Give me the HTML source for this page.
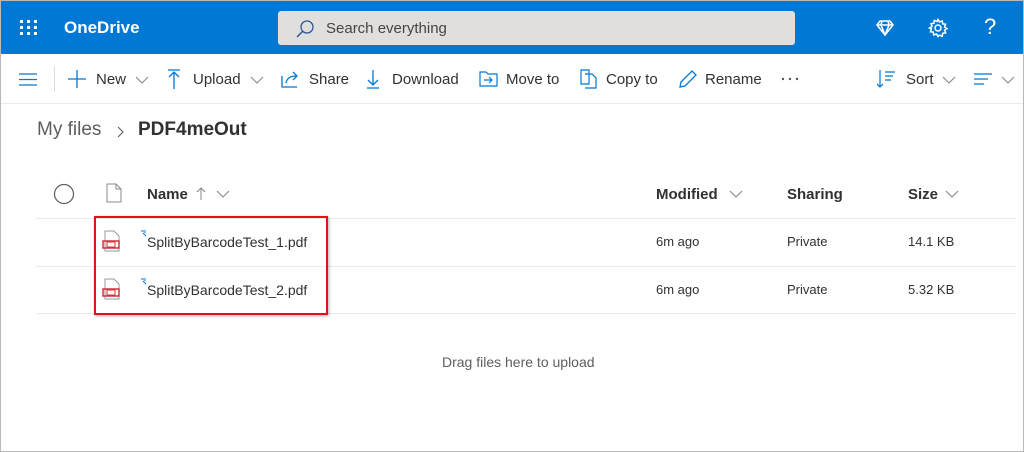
<!DOCTYPE html>
<html><head><meta charset="utf-8"><style>
*{margin:0;padding:0;box-sizing:border-box}
body{width:1024px;height:452px;overflow:hidden;background:#fff;font-family:"Liberation Sans",sans-serif;color:#323130;position:relative}
.frame{position:absolute;inset:0;border:1px solid #b8b8b8}
.hdr{position:absolute;left:1px;top:1px;width:1022px;height:53px;background:#0078d4}
.a{position:absolute;white-space:nowrap}
.tb{font-size:15px;color:#323130;top:71px}
.ico{position:absolute}
.line{position:absolute;left:36px;width:980px;height:1px;background:#edebe9}
.cv{position:absolute;width:14px;height:8px}
</style></head><body>
<div class="hdr"></div>
<svg class="ico" style="left:20px;top:20px" width="18" height="16"><g fill="#fff"><rect x="0" y="0" width="3" height="3"/><rect x="7" y="0" width="3" height="3"/><rect x="14" y="0" width="3" height="3"/><rect x="0" y="6" width="3" height="3"/><rect x="7" y="6" width="3" height="3"/><rect x="14" y="6" width="3" height="3"/><rect x="0" y="12" width="3" height="3"/><rect x="7" y="12" width="3" height="3"/><rect x="14" y="12" width="3" height="3"/></g></svg>
<div class="a" style="left:64px;top:18px;color:#fff;font-weight:bold;font-size:17px">OneDrive</div>
<div class="a" style="left:278px;top:11px;width:517px;height:34px;background:#e1dfdd;border-radius:3px"></div>
<svg class="ico" style="left:295px;top:19px" width="20" height="20"><circle cx="12" cy="8" r="6" fill="none" stroke="#2b5797" stroke-width="1.3"/><line x1="8" y1="12" x2="2" y2="18" stroke="#2b5797" stroke-width="1.5"/></svg>
<div class="a" style="left:326px;top:20px;font-size:15px;color:#444">Search everything</div>
<svg class="ico" style="left:876px;top:20px" width="18" height="16"><path d="M4 1h10l3 4-8 10-8-10z M1 5h16 M6 1l-1 4 4 10 4-10-1-4" fill="none" stroke="#fff" stroke-width="1.6"/></svg>
<svg class="ico" style="left:928px;top:18px" width="20" height="20"><g fill="none" stroke="#fff" stroke-width="1.5"><circle cx="10" cy="10" r="3"/><path d="M10 1.5l1.5 2.5 2.8-1 .4 2.9 2.9.4-1 2.8 2.5 1.5-2.5 1.5 1 2.8-2.9.4-.4 2.9-2.8-1L10 18.5l-1.5-2.5-2.8 1-.4-2.9-2.9-.4 1-2.8L1.5 10 4 8.5l-1-2.8 2.9-.4.4-2.9 2.8 1z"/></g></svg>
<div class="a" style="left:984px;top:14px;color:#fff;font-size:22px">?</div>
<svg class="ico" style="left:19px;top:73px" width="18" height="14"><path d="M0 1h18M0 6.5h18M0 12h18" stroke="#0078d4" stroke-width="1.3"/></svg>
<div class="a" style="left:54px;top:66px;width:1px;height:26px;background:#ddd"></div>
<svg class="ico" style="left:68px;top:70px" width="18" height="18"><path d="M9 0v18M0 9h18" stroke="#0078d4" stroke-width="1.3"/></svg>
<div class="a tb" style="left:96px">New</div>
<svg class="cv" style="left:135px;top:76px"><path d="M1 1l6 6 6-6" fill="none" stroke="#888" stroke-width="1.1"/></svg>
<svg class="ico" style="left:167px;top:69px" width="14" height="20"><path d="M1 1h12M7 3v17M2 8l5-5 5 5" fill="none" stroke="#0078d4" stroke-width="1.3"/></svg>
<div class="a tb" style="left:193px">Upload</div>
<svg class="cv" style="left:250px;top:76px"><path d="M1 1l6 6 6-6" fill="none" stroke="#888" stroke-width="1.1"/></svg>
<svg class="ico" style="left:281px;top:70px" width="20" height="18"><path d="M1 6v11h15 M5 13c1-5 5-7 10-7 M12 2l4 4-4 4" fill="none" stroke="#0078d4" stroke-width="1.3"/></svg>
<div class="a tb" style="left:309px">Share</div>
<svg class="ico" style="left:366px;top:69px" width="14" height="20"><path d="M1 19h12M7 1v15M2 11l5 5 5-5" fill="none" stroke="#0078d4" stroke-width="1.3"/></svg>
<div class="a tb" style="left:392px">Download</div>
<svg class="ico" style="left:479px;top:71px" width="20" height="16"><path d="M1 1h6l2 2h9v12H1z M5 9h8M10 6l3 3-3 3" fill="none" stroke="#0078d4" stroke-width="1.2"/></svg>
<div class="a tb" style="left:506px">Move to</div>
<svg class="ico" style="left:580px;top:69px" width="18" height="20"><path d="M1 1h8v14H1z M5 5h7l4 4v10H5" fill="none" stroke="#0078d4" stroke-width="1.2"/></svg>
<div class="a tb" style="left:606px">Copy to</div>
<svg class="ico" style="left:678px;top:69px" width="20" height="20"><path d="M2 18l1-5L14 2l4 4L7 17z" fill="none" stroke="#0078d4" stroke-width="1.3"/></svg>
<div class="a tb" style="left:705px">Rename</div>
<svg class="ico" style="left:781px;top:77px" width="20" height="4"><g fill="#555"><circle cx="2" cy="2" r="1.2"/><circle cx="9" cy="2" r="1.2"/><circle cx="16" cy="2" r="1.2"/></g></svg>
<svg class="ico" style="left:877px;top:70px" width="20" height="18"><path d="M3 0v17M0 14l3 3 3-3M8 2h10M8 6h8M8 10h6" fill="none" stroke="#0078d4" stroke-width="1.2"/></svg>
<div class="a tb" style="left:906px">Sort</div>
<svg class="cv" style="left:942px;top:76px"><path d="M1 1l6 6 6-6" fill="none" stroke="#888" stroke-width="1.1"/></svg>
<svg class="ico" style="left:974px;top:73px" width="18" height="12"><path d="M0 1h18M0 6h14M0 11h10" stroke="#0078d4" stroke-width="1.3"/></svg>
<svg class="cv" style="left:1001px;top:76px"><path d="M1 1l6 6 6-6" fill="none" stroke="#888" stroke-width="1.1"/></svg>
<div class="a" style="left:1px;top:103px;width:1022px;height:1px;background:#edebe9"></div>
<div class="a" style="left:37px;top:119px;font-size:19px;color:#605e5c">My files</div>
<svg class="ico" style="left:117px;top:126px" width="8" height="12"><path d="M1 1l5 5-5 5" fill="none" stroke="#605e5c" stroke-width="1.1"/></svg>
<div class="a" style="left:138px;top:119px;font-size:19px;font-weight:bold">PDF4meOut</div>
<svg class="ico" style="left:53px;top:183px" width="22" height="22"><circle cx="11" cy="11" r="9.5" fill="none" stroke="#605e5c" stroke-width="1.2"/></svg>
<svg class="ico" style="left:106px;top:183px" width="16" height="20"><path d="M1 1h9l5 5v13H1z M10 1v5h5" fill="none" stroke="#888" stroke-width="1"/></svg>
<div class="a" style="left:147px;top:186px;font-size:15px;font-weight:bold">Name</div>
<svg class="ico" style="left:196px;top:187px" width="10" height="14"><path d="M5 13V1M1 5l4-4 4 4" fill="none" stroke="#888" stroke-width="1"/></svg>
<svg class="cv" style="left:216px;top:190px"><path d="M1 1l6 6 6-6" fill="none" stroke="#888" stroke-width="1.1"/></svg>
<div class="a" style="left:656px;top:186px;font-size:15px;font-weight:bold">Modified</div>
<svg class="cv" style="left:729px;top:190px"><path d="M1 1l6 6 6-6" fill="none" stroke="#888" stroke-width="1.1"/></svg>
<div class="a" style="left:787px;top:186px;font-size:15px;font-weight:bold">Sharing</div>
<div class="a" style="left:908px;top:186px;font-size:15px;font-weight:bold">Size</div>
<svg class="cv" style="left:945px;top:190px"><path d="M1 1l6 6 6-6" fill="none" stroke="#888" stroke-width="1.1"/></svg>
<div class="line" style="top:218px"></div>
<div class="line" style="top:266px"></div>
<div class="line" style="top:313px"></div>
<svg class="ico" style="left:102px;top:230px" width="20" height="22"><path d="M3 1h9l5 5v15H3z" fill="#fff" stroke="#999"/><rect x="1" y="11" width="16" height="7" fill="none" stroke="#d13438" stroke-width="1.5"/><rect x="5" y="12" width="8" height="5" fill="#fff" stroke="#d13438"/></svg>
<svg class="ico" style="left:140px;top:229px" width="8" height="8"><path d="M1 2h3M5 1v3M3 4l3 3" stroke="#0078d4" stroke-width="1"/></svg>
<div class="a" style="left:147px;top:234px;font-size:14px">SplitByBarcodeTest_1.pdf</div>
<svg class="ico" style="left:102px;top:278px" width="20" height="22"><path d="M3 1h9l5 5v15H3z" fill="#fff" stroke="#999"/><rect x="1" y="11" width="16" height="7" fill="none" stroke="#d13438" stroke-width="1.5"/><rect x="5" y="12" width="8" height="5" fill="#fff" stroke="#d13438"/></svg>
<svg class="ico" style="left:140px;top:277px" width="8" height="8"><path d="M1 2h3M5 1v3M3 4l3 3" stroke="#0078d4" stroke-width="1"/></svg>
<div class="a" style="left:147px;top:282px;font-size:14px">SplitByBarcodeTest_2.pdf</div>
<div class="a" style="left:656px;top:234px;font-size:13px">6m ago</div>
<div class="a" style="left:787px;top:234px;font-size:13px">Private</div>
<div class="a" style="left:908px;top:234px;font-size:13px">14.1 KB</div>
<div class="a" style="left:656px;top:282px;font-size:13px">6m ago</div>
<div class="a" style="left:787px;top:282px;font-size:13px">Private</div>
<div class="a" style="left:908px;top:282px;font-size:13px">5.32 KB</div>
<div class="a" style="left:94px;top:216px;width:234px;height:99px;border:2px solid #e0131b;box-shadow:1px 1px 3px rgba(0,0,0,.3)"></div>
<div class="a" style="left:442px;top:354px;font-size:14px;color:#605e5c">Drag files here to upload</div>
<div class="frame"></div>
</body></html>
